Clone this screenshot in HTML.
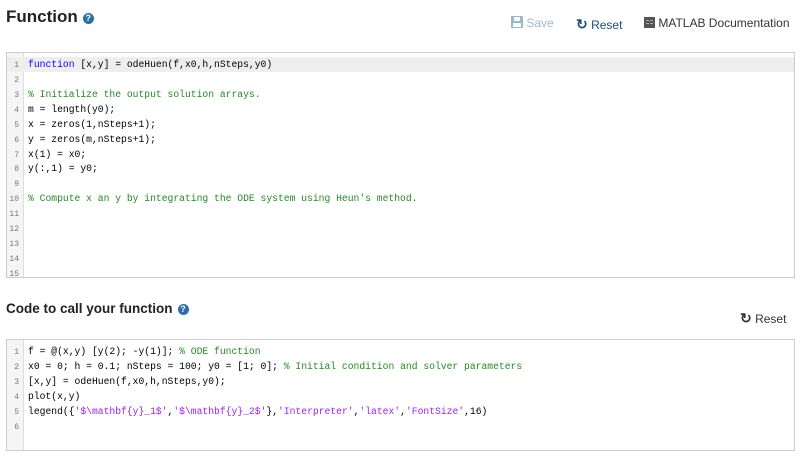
<!DOCTYPE html>
<html><head><style>
body{margin:0;width:805px;height:461px;background:#fff;font-family:"Liberation Sans",sans-serif;position:relative;overflow:hidden}
h1{position:absolute;left:6px;top:7px;margin:0;font-size:17px;font-weight:bold;color:#222}
h2{position:absolute;left:6px;top:301px;margin:0;font-size:13.5px;font-weight:bold;color:#222}
.q{display:inline-block;width:11px;height:11px;border-radius:50%;background:#2c6fa6;color:#fff;font-size:9px;line-height:11px;text-align:center;vertical-align:1px;margin-left:5px}
.ed{position:absolute;left:6px;width:789px;border:1px solid #ccc;background:#fff;font-family:"Liberation Mono",monospace;font-size:9.7px}
.g{position:absolute;left:0;top:0;bottom:0;width:16px;background:#f5f5f5;border-right:1px solid #ddd}
.ln{position:relative;height:14.93px;line-height:15.5px;white-space:pre;color:#000}
.ln .n{display:inline-block;width:16px;text-align:right;padding-right:4px;box-sizing:border-box;color:#777;font-size:8px}
.ln .t{position:absolute;left:21px}
.hl{background:#eee}
.k{color:#0e00ff}.c{color:#228b22}.s{color:#a020f0}
.btn{position:absolute;top:16px;font-size:12px}
</style></head><body>
<h1>Function<span class="q">?</span></h1>
<div class="btn" style="left:511px;color:#9bb7cf">
<svg width="12" height="12" style="vertical-align:-1px"><rect x="0" y="0" width="12" height="12" rx="1" fill="#9bb7cf"/><rect x="3" y="1" width="6" height="4" fill="#fff"/><rect x="2" y="7" width="8" height="4" fill="#fff"/></svg> Save</div>
<div class="btn" style="left:576px;color:#1d4f7c"><span style="font-weight:bold;font-size:14px">&#x21bb;</span> Reset</div>
<div class="btn" style="left:644px;color:#333"><svg width="11" height="11" style="vertical-align:-1px"><rect width="11" height="11" fill="#555"/><rect x="2" y="3" width="3" height="1" fill="#aaa"/><rect x="6" y="3" width="3" height="1" fill="#aaa"/><rect x="2" y="6" width="3" height="1" fill="#aaa"/><rect x="6" y="6" width="3" height="1" fill="#aaa"/></svg> MATLAB Documentation</div>
<div class="ed" style="top:52px;height:226px;padding-top:4px;box-sizing:border-box">
<div class="g"></div>
<div class="ln hl"><span class="n">1</span><span class="t"><span class="k">function</span> [x,y] = odeHuen(f,x0,h,nSteps,y0)</span></div>
<div class="ln"><span class="n">2</span></div>
<div class="ln"><span class="n">3</span><span class="t c">% Initialize the output solution arrays.</span></div>
<div class="ln"><span class="n">4</span><span class="t">m = length(y0);</span></div>
<div class="ln"><span class="n">5</span><span class="t">x = zeros(1,nSteps+1);</span></div>
<div class="ln"><span class="n">6</span><span class="t">y = zeros(m,nSteps+1);</span></div>
<div class="ln"><span class="n">7</span><span class="t">x(1) = x0;</span></div>
<div class="ln"><span class="n">8</span><span class="t">y(:,1) = y0;</span></div>
<div class="ln"><span class="n">9</span></div>
<div class="ln"><span class="n">10</span><span class="t c">% Compute x an y by integrating the ODE system using Heun's method.</span></div>
<div class="ln"><span class="n">11</span></div>
<div class="ln"><span class="n">12</span></div>
<div class="ln"><span class="n">13</span></div>
<div class="ln"><span class="n">14</span></div>
<div class="ln"><span class="n">15</span></div>
</div>
<h2>Code to call your function<span class="q">?</span></h2>
<div class="btn" style="left:740px;top:310px;color:#333"><span style="font-weight:bold;font-size:14px">&#x21bb;</span> Reset</div>
<div class="ed" style="top:339px;height:112px;padding-top:4px;box-sizing:border-box">
<div class="g"></div>
<div class="ln"><span class="n">1</span><span class="t">f = @(x,y) [y(2); -y(1)]; <span class="c">% ODE function</span></span></div>
<div class="ln"><span class="n">2</span><span class="t">x0 = 0; h = 0.1; nSteps = 100; y0 = [1; 0]; <span class="c">% Initial condition and solver parameters</span></span></div>
<div class="ln"><span class="n">3</span><span class="t">[x,y] = odeHuen(f,x0,h,nSteps,y0);</span></div>
<div class="ln"><span class="n">4</span><span class="t">plot(x,y)</span></div>
<div class="ln"><span class="n">5</span><span class="t">legend({<span class="s">'$\mathbf{y}_1$'</span>,<span class="s">'$\mathbf{y}_2$'</span>},<span class="s">'Interpreter'</span>,<span class="s">'latex'</span>,<span class="s">'FontSize'</span>,16)</span></div>
<div class="ln"><span class="n">6</span></div>
</div>
</body></html>
